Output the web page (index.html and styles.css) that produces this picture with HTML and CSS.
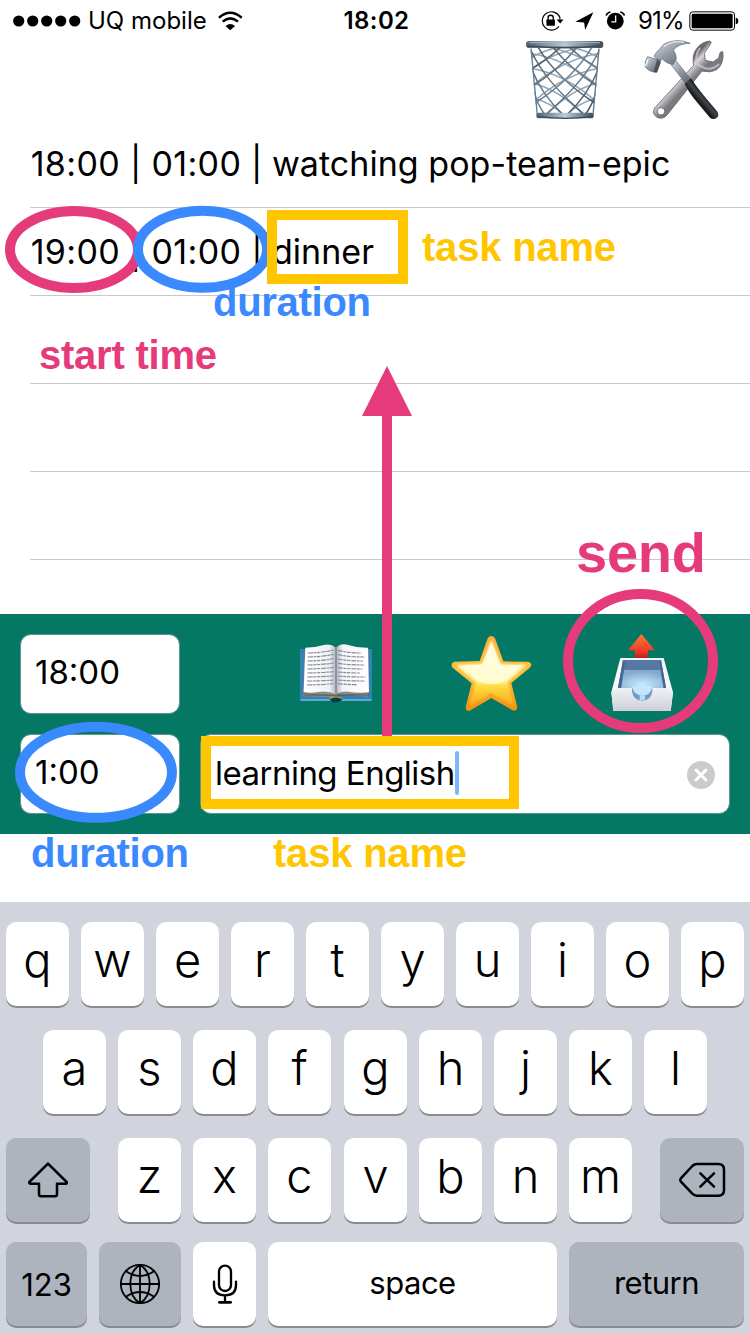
FILE: index.html
```html
<!DOCTYPE html>
<html lang="en">
<head>
<meta charset="utf-8">
<title>Task timer</title>
<link rel="stylesheet" href="styles.css">
</head>
<body>
<div class="screen">
  <header class="status">
    <div class="status-left">
      <svg class="dots" viewBox="0 0 68 12"><circle cx="5.7" cy="6" r="5.6"/><circle cx="19.7" cy="6" r="5.6"/><circle cx="33.7" cy="6" r="5.6"/><circle cx="47.7" cy="6" r="5.6"/><circle cx="61.7" cy="6" r="5.6"/></svg>
      <span class="carrier">UQ mobile</span>
      <svg class="wifi" viewBox="654 30 76 60"><path d="M657 50Q691 20 726 50M668 62Q691 42 715 62" fill="none" stroke="#000" stroke-width="7.5"/><path d="M677 75Q691 63 706 75L691 88Z"/></svg>
    </div>
    <span class="clock">18:02</span>
    <div class="status-right">
      <svg class="sys-icons" viewBox="90 28 260 64">
        <path d="M148 78A28 28 0 1 1 151 50V57" fill="none" stroke="#000" stroke-width="3.6"/>
        <path d="M141 57H162L152 69Z"/>
        <rect x="110" y="57" width="26" height="19" rx="2"/><path d="M115 59V52a8 8 0 0 1 16 0v7" fill="none" stroke="#000" stroke-width="4"/>
        <path d="M253 35L198 64L225 66L228 89Z"/>
        <circle cx="320" cy="62" r="25.5"/>
        <path d="M321 45V64H308" fill="none" stroke="#fff" stroke-width="4"/>
        <path d="M292 45Q295 36 305 34M335 34Q345 36 348 45" fill="none" stroke="#000" stroke-width="5"/>
      </svg>
      <span class="percent">91%</span>
      <svg class="battery" viewBox="539 31 150 60"><rect x="541.5" y="33.500" width="134" height="55" rx="9" fill="none" stroke="#000" stroke-width="3"/><rect x="547" y="39" width="123" height="44" rx="4"/><path d="M679 51Q687 52 687 61T679 71Z"/></svg>
    </div>
  </header>

  <div class="toolbar">
    <svg class="trash" viewBox="45 120 240 240">
      <defs>
        <linearGradient id="rim" x1="0" x2="1"><stop offset="0" stop-color="#4c6275"/><stop offset=".25" stop-color="#8297a9"/><stop offset=".5" stop-color="#bdc9d3"/><stop offset=".8" stop-color="#6c8396"/><stop offset="1" stop-color="#3f4b55"/></linearGradient>
        <linearGradient id="wire" x1="0" y1="0" x2="1" y2="1"><stop offset="0" stop-color="#4a5661"/><stop offset=".5" stop-color="#6f808e"/><stop offset="1" stop-color="#3c454d"/></linearGradient>
        <clipPath id="basket"><path d="M61 142H270L250 347H80Z"/></clipPath>
      </defs>
      <g clip-path="url(#basket)" fill="none">
        <g stroke="#8ea5b8" stroke-width="4.500">
          <path d="M60 160Q180 180 270 265M64 205Q170 225 258 305M68 250Q150 270 220 345M74 295Q125 310 160 345M110 140Q210 160 270 210M175 140Q230 150 270 175"/>
          <path d="M270 160Q150 180 60 265M266 205Q160 225 72 305M262 250Q180 270 110 345M256 295Q205 310 170 345M220 140Q120 160 60 210M155 140Q100 150 60 175"/>
        </g>
        <g stroke="url(#wire)" stroke-width="4.500">
          <path d="M62 150Q105 245 225 345M64 205Q95 285 160 345M85 143Q140 235 256 310M130 143Q185 210 262 258M180 143Q225 185 268 208M70 270Q80 310 105 345"/>
          <path d="M268 150Q225 245 105 345M266 205Q235 285 170 345M245 143Q190 235 74 310M200 143Q145 210 68 258M150 143Q105 185 62 208M260 270Q250 310 225 345"/>
        </g>
      </g>
      <path d="M63 145L82 345M267 145L249 345" stroke="#607b91" stroke-width="4" fill="none"/>
      <rect x="79" y="338" width="172" height="17" rx="8" fill="url(#rim)"/><path d="M83 350Q165 360 247 350" stroke="#3c444b" stroke-width="4" fill="none"/>
      <rect x="48" y="123" width="232" height="21" rx="10" fill="url(#rim)"/><path d="M52 138Q165 148 276 138" stroke="#424b53" stroke-width="5" fill="none"/><path d="M58 128H270" stroke="#a6b8c7" stroke-width="3"/>
    </svg>
    <svg class="tools" viewBox="399 114 243 249">
      <defs>
        <linearGradient id="steel" x1="0" y1="0" x2="1" y2="1"><stop offset="0" stop-color="#d9dee4"/><stop offset=".5" stop-color="#9097a1"/><stop offset="1" stop-color="#5a5f69"/></linearGradient>
        <linearGradient id="shaft" gradientUnits="userSpaceOnUse" x1="478" y1="250" x2="510" y2="280"><stop offset="0" stop-color="#74656a"/><stop offset=".35" stop-color="#d8d8dc"/><stop offset=".7" stop-color="#a2a0a6"/><stop offset="1" stop-color="#7c7880"/></linearGradient>
        <linearGradient id="grip" gradientUnits="userSpaceOnUse" x1="565" y1="305" x2="585" y2="288"><stop offset="0" stop-color="#17191b"/><stop offset=".6" stop-color="#42464a"/><stop offset="1" stop-color="#1b1d1f"/></linearGradient>
      </defs>
      <path d="M599 123Q606 124 602 132L583 160L586 181L609 186L626 174L630 158Q638 151 639 158Q642 192 620 209Q600 220 576 213L472 344Q459 360 441 352Q424 341 434 324L551 196Q544 164 562 143Q576 126 599 123ZM453 323a11 11 0 1 0 .1 0Z" fill="url(#shaft)" fill-rule="evenodd" stroke="#66686e" stroke-width="2.500"/>
      <path d="M570 144Q552 167 563 194L585 205Q610 210 627 192" fill="none" stroke="#c8cdd4" stroke-width="6" opacity=".75"/>
      <path d="M480 190L496 180L544 239L527 251Z" fill="url(#steel)" stroke="#697079" stroke-width="2"/>
      <path d="M437 160Q450 146 461 133Q500 112 541 130Q505 130 490 151Q499 160 499 177L489 194Q469 191 458 178L446 184L432 169Z" fill="url(#steel)" stroke="#626c77" stroke-width="2"/>
      <path d="M413 170L452 182L441 216Q422 219 406 201Q402 184 413 170Z" fill="url(#steel)" stroke="#555c66" stroke-width="2"/>
      <path d="M442 177L452 188L440 218L431 215Z" fill="#4c5058"/><path d="M414 177L407 198" stroke="#edf2f5" stroke-width="5"/>
      <path d="M461 140Q490 119 522 127" stroke="#e2e7ec" stroke-width="4" fill="none"/>
      <path d="M524 251L543 235Q558 259 580 285L621 334Q630 347 620 354Q609 361 600 353L553 297Q536 276 524 251Z" fill="url(#grip)"/>
    </svg>
  </div>

  <main class="tasks">
    <div class="task">18:00 | 01:00 | <span class="name">watching pop-team-epic</span></div>
    <div class="task">19:00 | 01:00 | <span class="name">dinner</span></div>
    <div class="task"></div>
    <div class="task"></div>
    <div class="task"></div>
    <div class="task last"></div>
  </main>

  <section class="panel">
    <div class="panel-row">
      <div class="field short">18:00</div>
      <svg class="book" viewBox="54 66 228 186">
        <defs><linearGradient id="page" x1="0" x2="1"><stop offset="0" stop-color="#fff"/><stop offset=".8" stop-color="#eef0f5"/><stop offset="1" stop-color="#aeb3be"/></linearGradient><linearGradient id="page2" x1="0" x2="1"><stop offset="0" stop-color="#aab0bb"/><stop offset=".2" stop-color="#f4f5f9"/><stop offset="1" stop-color="#fff"/></linearGradient></defs>
        <path d="M60 87H276V242H60Z" fill="#3680b2"/><path d="M62 240H274" stroke="#70b8de" stroke-width="5"/>
        <path d="M75 88L69 229L166 232L172 222L264 230L266 88Z" fill="#8a8b8b"/><path d="M70 221L166 227M172 226L267 221M71 226H267" stroke="#57585a" stroke-width="2"/>
        <path d="M76 83Q105 83 132 75Q153 70 168 83V223Q145 211 113 216Q92 220 71 216Z" fill="url(#page)"/>
        <path d="M168 83Q181 69 202 74Q232 84 264 83L267 217Q235 220 207 215Q183 212 168 223Z" fill="url(#page2)"/>
        <path d="M168 82V222" stroke="#7c818b" stroke-width="4"/>
        <g fill="none" stroke="#8a8c94" stroke-width="3.500" stroke-dasharray="15 2 8 2 11 3"><path d="M83 99Q130 98 161 90M83 111Q130 110 161 103M82 123Q130 122 161 116M82 135Q130 134 161 129M82 147Q130 146 161 142M82 159Q130 158 161 155M82 171Q130 170 161 168M81 183Q130 183 161 180M81 195Q130 194 161 191"/><path d="M174 91Q205 99 243 99M174 104Q205 111 254 111M174 117Q205 123 249 123M174 130Q205 135 256 135M174 143Q205 147 247 147M174 156Q205 159 241 159M174 168Q205 171 258 171M174 180Q205 183 257 183M174 191Q205 194 231 194"/></g>
        <path d="M148 238Q168 220 188 238Q178 249 158 247Z" fill="#073d42"/><path d="M149 236Q168 225 187 236" fill="none" stroke="#c49a23" stroke-width="4"/>
      </svg>
      <svg class="star" viewBox="514 45 246 231">
        <defs><linearGradient id="gold" x1="0" y1="0" x2="0" y2="1"><stop offset="0" stop-color="#ffae35"/><stop offset=".5" stop-color="#ffc438"/><stop offset="1" stop-color="#f38e10"/></linearGradient><linearGradient id="gloss" x1="0" y1="0" x2="0" y2="1"><stop offset="0" stop-color="#fffdf5"/><stop offset=".6" stop-color="#fff8bd"/><stop offset=".69" stop-color="#ffdd42"/><stop offset="1" stop-color="#f8a81c"/></linearGradient><filter id="soft"><feGaussianBlur stdDeviation="3"/></filter></defs>
        <path d="M624 55Q635 41 646 55L671 124L746 125Q762 130 750 143L695 189L713 262Q710 277 697 270L635 234L573 271Q559 277 558 262L576 190L519 143Q510 130 524 125L600 123Z" fill="url(#gold)"/>
        <path d="M635 61L663 133L740 134L684 186L703 258L635 220L569 257L588 187L529 135L608 131Z" fill="url(#gloss)" filter="url(#soft)"/>
        <path d="M550 137L608 133L635 65L663 134L720 136L684 177Q665 193 635 193Q606 192 586 177Z" fill="#fffddd" opacity=".65"/>
      </svg>
      <svg class="outbox" viewBox="180 339 192 237">
        <defs><linearGradient id="red" x1="0" y1="0" x2="0" y2="1"><stop offset="0" stop-color="#ff7b32"/><stop offset=".7" stop-color="#ee3b28"/><stop offset="1" stop-color="#b91e18"/></linearGradient><linearGradient id="front" x1="0" y1="0" x2="0" y2="1"><stop offset="0" stop-color="#f0f1f5"/><stop offset="1" stop-color="#cdd0d8"/></linearGradient><radialGradient id="floor" cx=".5" cy=".8" r=".7"><stop offset="0" stop-color="#c9e9ff"/><stop offset="1" stop-color="#85aad0"/></radialGradient></defs>
        <path d="M274 342L315 391H294V416H255V391H234Z" fill="url(#red)"/>
        <path d="M211 414H341L369 517L362 573H190L184 517Z" fill="#f6f7fa"/>
        <path d="M219 420H333L348 504H204Z" fill="#5578a5"/><path d="M222 450H331L341 504H213Z" fill="url(#floor)"/><path d="M219 420L204 504H213L225 426M333 420L348 504H341L329 426" fill="#416790"/>
        <path d="M184 516L204 504H246Q247 531 275 532Q305 531 307 504H348L369 516L362 573H190Z" fill="url(#front)"/>
        <path d="M246 504H307V514Q304 541 276 543Q248 539 246 514Z" fill="#6d9bcb"/><path d="M247 498H306V504Q301 526 277 527Q252 525 247 504Z" fill="#c3e5fd"/><path d="M269 526H285V541L269 542Z" fill="#b5daf4"/>
      </svg>
    </div>
    <div class="panel-row second">
      <div class="field short">1:00</div>
      <div class="field long"><span class="value">learning English</span><i class="caret"></i>
        <svg class="clear" viewBox="0 0 28 28"><circle cx="14" cy="14" r="14" fill="#cbcbcb"/><path d="M9 9L19 19M19 9L9 19" stroke="#fff" stroke-width="3" stroke-linecap="round"/></svg>
      </div>
    </div>
  </section>

  <section class="keyboard">
    <div class="keys"><b>q</b><b>w</b><b>e</b><b>r</b><b>t</b><b>y</b><b>u</b><b>i</b><b>o</b><b>p</b></div>
    <div class="keys home"><b>a</b><b>s</b><b>d</b><b>f</b><b class="mid">g</b><b>h</b><b>j</b><b>k</b><b>l</b></div>
    <div class="keys">
      <b class="dark shift"><svg width="40" height="36" viewBox="84 125 120 108"><path d="M144 130L88 185Q87 190 92 190H117V222Q117 228 123 228H165Q171 228 171 222V190H197Q202 190 200 185Z" fill="none" stroke="#000" stroke-width="7.500" stroke-linejoin="round"/></svg></b>
      <b>z</b><b>x</b><b>c</b><b class="mid">v</b><b>b</b><b>n</b><b>m</b>
      <b class="dark delete"><svg width="48" height="36" viewBox="909 126 144 108"><path d="M966 132H1030Q1047 132 1047 149V210Q1047 227 1030 227H966Q958 227 952 221L917 184Q914 180 917 176L952 138Q958 132 966 132ZM976 160L1017 200M1017 160L976 200" fill="none" stroke="#000" stroke-width="7.500" stroke-linecap="round"/></svg></b>
    </div>
    <div class="keys bottom">
      <b class="dark word num">123</b>
      <b class="dark globe"><svg width="42" height="42" viewBox="357 429 126 126"><g fill="none" stroke="#000" stroke-width="5.500"><circle cx="420" cy="492" r="57.500"/><path d="M420 434V550M362 492H478M420 434Q391 452 391 492T420 550M420 434Q449 452 449 492T420 550M378 454Q420 482 462 454M378 530Q420 502 462 530"/></g></svg></b>
      <b class="mic"><svg width="26" height="40" viewBox="636 433 78 120"><g fill="none" stroke="#000" stroke-width="7" stroke-linecap="round"><rect x="657" y="438" width="36" height="76" rx="18"/><path d="M642 486V496Q642 527 675 527T708 496V486M675 528V546"/><path d="M658 548H692" stroke-width="8"/></g></svg></b>
      <b class="word space">space</b>
      <b class="dark word return">return</b>
    </div>
  </section>

  <svg class="notes" viewBox="0 0 750 1334">
    <g fill="none" stroke-width="10">
      <ellipse cx="74" cy="249.500" rx="64" ry="38.500" stroke="#e63b7a"/>
      <ellipse cx="202.500" cy="249.300" rx="64.500" ry="38.500" stroke="#3b89ff"/>
      <rect x="272" y="215" width="131" height="64" stroke="#ffc600"/>
      <ellipse cx="640.500" cy="661" rx="72.500" ry="67" stroke="#e63b7a"/>
      <ellipse cx="96" cy="772.300" rx="76" ry="45.500" stroke="#3b89ff"/>
      <path d="M387 410V736" stroke="#e63b7a"/>
      <rect x="206" y="741" width="308" height="63" stroke="#ffc600"/>
    </g>
    <path d="M387 366L412 416H362Z" fill="#e63b7a"/>
    <g class="labels">
      <text x="422" y="261" textLength="194" fill="#ffc600">task name</text>
      <text x="213" y="315.500" textLength="158" fill="#3b89ff">duration</text>
      <text x="39" y="368.500" textLength="178" fill="#e63b7a">start time</text>
      <text class="big" x="576" y="572" textLength="130" fill="#e63b7a">send</text>
      <text x="31" y="867" textLength="158" fill="#3b89ff">duration</text>
      <text x="273" y="867" textLength="194" fill="#ffc600">task name</text>
    </g>
  </svg>
</div>
</body>
</html>
```
FILE: styles.css
```css
* { box-sizing: border-box; }
body { margin: 0; background: #fff; color: #000; font-family: Inter, Roboto, sans-serif; }
svg { display: block; flex: none; }
.screen { position: relative; width: 750px; height: 1334px; overflow: hidden; display: flex; flex-direction: column; }

.status { height: 40px; display: grid; grid-template-columns: 1fr auto 1fr; align-items: center; font-size: 24px; line-height: 39px; white-space: nowrap; padding: 1px 11px 0 13px; }
.status-left, .status-right { display: flex; align-items: center; }
.status-right { justify-content: flex-end; }
.dots { width: 68px; height: 12px; }
.carrier { margin-left: 7px; width: 118px; letter-spacing: 0; }
.wifi { width: 25px; height: 20px; margin-left: 12px; }
.clock { font-weight: 600; letter-spacing: 0.4px; padding-left: 1px; }
.sys-icons { width: 87px; height: 21px; }
.percent { width: 46px; margin-left: 12px; letter-spacing: -0.8px; }
.battery { width: 50px; height: 20px; margin-left: 5px; }

.toolbar { height: 80px; display: flex; justify-content: flex-end; gap: 38px; padding-right: 26px; }
.trash { width: 80px; height: 80px; }
.tools { width: 81px; height: 83px; margin-top: -2px; }

.tasks { height: 494px; padding-left: 30px; overflow: hidden; }
.task { height: 88px; border-bottom: 1px solid #c8c7cc; font-size: 34px; line-height: 88px; white-space: nowrap; letter-spacing: 0.35px; text-indent: 0.7px; }
.name { letter-spacing: 0.05px; margin-left: -0.8px; }
.last { border: 0; }

.panel { height: 220px; background: #057865; padding: 20px; display: flex; flex-direction: column; gap: 20px; }
.panel-row { height: 80px; display: flex; }
.second { gap: 20px; }
.field { height: 80px; border: 1px solid #65968d; border-radius: 11px; background: #fff; display: flex; align-items: center; padding: 0 14px 4px; font-size: 33px; line-height: 44px; }
.short { width: 160px; }
.long { flex: 1; padding: 0 14px 2px; }
.value { letter-spacing: -0.52px; }
.caret { width: 4px; height: 44px; border-radius: 2px; background: #7db8ff; }
.clear { width: 28px; height: 28px; margin-left: auto; margin-top: 3px; }
.book { width: 76px; height: 62px; margin: 8px 0 0 118px; }
.star { width: 82px; height: 77px; margin: 1px 0 0 77px; }
.outbox { width: 64px; height: 79px; margin: -1px 0 0 77px; }

.keyboard { margin-top: 68px; height: 432px; background: #d1d4dc; padding: 20px 6px 0; display: flex; flex-direction: column; gap: 24px; }
.keys { display: flex; gap: 12px; height: 84px; }
.keys b { width: 63px; height: 84px; border-radius: 10px; background: #fff; box-shadow: 0 2px 0 #888b90; display: flex; align-items: center; justify-content: center; padding-bottom: 8px; font-size: 47px; font-weight: 350; line-height: 56px; }
.home { padding-left: 37px; }
.keys .mid { margin-left: 1px; }
.keys .dark { background: #adb4be; padding: 0; }
.keys .shift { width: 84px; margin-right: 16px; }
.keys .delete { width: 84px; margin-left: 16px; }
.bottom { margin-top: -4px; }
.keys .word { font-size: 31px; font-weight: 400; padding: 0 0 3px; letter-spacing: -0.5px; }
.keys .num { width: 81px; padding: 2px 0 0; letter-spacing: 0; }
.keys .globe { width: 82px; }
.keys .mic { padding: 0; }
.keys .space { width: 289px; }
.keys .return { width: 175px; }

/* Callouts drawn over the app */
.notes { position: absolute; left: 0; top: 0; width: 750px; height: 1334px; }
.labels { font-family: "Liberation Sans", Arial, sans-serif; font-weight: 700; font-size: 40px; }
.big { font-size: 56px; }
```
